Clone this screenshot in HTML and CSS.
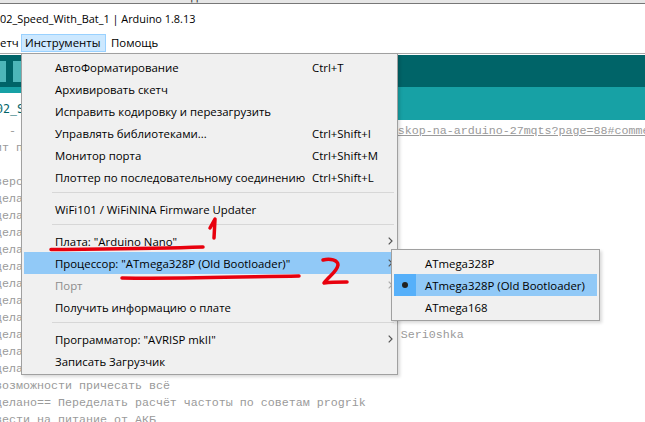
FILE: index.html
```html
<!DOCTYPE html>
<html lang="ru">
<head>
<meta charset="utf-8">
<title>Arduino</title>
<link rel="stylesheet" href="styles.css">
</head>
<body>
<div class="app">
  <div class="console"><span class="console-text">17% 1 свободно</span></div>
  <div class="titlebar">02_Speed_With_Bat_1 | Arduino 1.8.13</div>
  <div class="menubar">
    <span class="mtitle mtitle-first">етч</span>
    <span class="mtitle mtitle-active">Инструменты</span>
    <span class="mtitle mtitle-last">Помощь</span>
  </div>
  <div class="toolbar"><span class="tbtn tbtn-a"></span><span class="tbtn tbtn-b"></span></div>
  <div class="tabs"><span class="tab">02_Speed_With_Bat_1</span></div>
  <pre class="code">: -                                                       <span class="link">skop-na-arduino-27mqts?page=88#comments</span>
ит прошивку

версия
делано
делано
делано
делано
делано
делано
делано
делано
делано                                                    Seri0shka
делано
делано
возможности причесать всё
делано== Переделать расчёт частоты по советам progrik
вести на питание от АКБ</pre>
</div>

<div class="menu main-menu">
  <div class="row"><span class="label">АвтоФорматирование</span><span class="key">Ctrl+T</span></div>
  <div class="row"><span class="label">Архивировать скетч</span></div>
  <div class="row"><span class="label">Исправить кодировку и перезагрузить</span></div>
  <div class="row"><span class="label">Управлять библиотеками...</span><span class="key">Ctrl+Shift+I</span></div>
  <div class="row"><span class="label">Монитор порта</span><span class="key">Ctrl+Shift+M</span></div>
  <div class="row"><span class="label">Плоттер по последовательному соединению</span><span class="key">Ctrl+Shift+L</span></div>
  <div class="sep"></div>
  <div class="row"><span class="label">WiFi101 / WiFiNINA Firmware Updater</span></div>
  <div class="sep"></div>
  <div class="row"><span class="label">Плата: "Arduino Nano"</span><svg class="arrow" viewBox="0 0 5 8"><path d="M.7.6L4 4 .7 7.4" fill="none" stroke="#555" stroke-width="1.2"/></svg></div>
  <div class="row row-hl"><span class="label">Процессор: "ATmega328P (Old Bootloader)"</span><svg class="arrow" viewBox="0 0 5 8"><path d="M.7.6L4 4 .7 7.4" fill="none" stroke="#555" stroke-width="1.2"/></svg></div>
  <div class="row row-off"><span class="label">Порт</span><svg class="arrow" viewBox="0 0 5 8"><path d="M.7.6L4 4 .7 7.4" fill="none" stroke="#aaa" stroke-width="1.2"/></svg></div>
  <div class="row"><span class="label">Получить информацию о плате</span></div>
  <div class="sep"></div>
  <div class="row"><span class="label">Программатор: "AVRISP mkII"</span><svg class="arrow" viewBox="0 0 5 8"><path d="M.7.6L4 4 .7 7.4" fill="none" stroke="#555" stroke-width="1.2"/></svg></div>
  <div class="row"><span class="label">Записать Загрузчик</span></div>
</div>

<div class="menu sub-menu">
  <div class="subrow"><span class="label">ATmega328P</span></div>
  <div class="subrow subrow-hl"><span class="bullet"><i class="dot"></i></span><span class="label">ATmega328P (Old Bootloader)</span></div>
  <div class="subrow"><span class="label">ATmega168</span></div>
</div>

<svg class="ink" viewBox="0 0 645 422" width="645" height="422" aria-hidden="true">
  <g fill="none" stroke="#e8000d" stroke-linecap="round" stroke-linejoin="round" stroke-width="3.5">
    <path d="M51 249.5C90 249 150 249 203 247"/>
    <path d="M122 278C180 279 240 277 299 276"/>
    <path d="M210 228L215 219L214 238"/>
    <path d="M323 260C330 258 338 260 338 265C337 272 328 277 324 283C331 282 340 282 347 282"/>
  </g>
</svg>
</body>
</html>
```

FILE: styles.css
```css
* { box-sizing: border-box; }
html, body { margin: 0; padding: 0; }
body { width: 645px; height: 422px; overflow: hidden; background: #fff; font-family: "Open Sans", "Noto Sans", sans-serif; color: #000; position: relative; }
.app { display: flex; flex-direction: column; height: 422px; }
.console { height: 4px; background: #e6e6e6; border-bottom: 1px solid #777; overflow: hidden; flex: none; }
.console-text { display: block; margin: -11px 0 0 120px; font-size: 12px; line-height: 14px; color: #333; }
.titlebar { height: 30px; font-size: 10.9px; line-height: 30px; color: #000; flex: none; white-space: nowrap; }
.menubar { height: 20px; display: flex; font-size: 11.4px; line-height: 18px; flex: none; border-bottom: 1px solid #a9a9a9; }
.mtitle-first { width: 21px; overflow: hidden; white-space: nowrap; }
.mtitle-active { height: 18px; width: 85px; padding-left: 3px; background: #cce8ff; border: 1px solid #99d1ff; line-height: 16px; }
.mtitle-last { padding-left: 5px; }
.toolbar { height: 32px; margin-top: 1px; background: #006468; display: flex; padding-top: 6px; flex: none; }
.tbtn { height: 21px; background: #4db6b9; }
.tbtn-a { width: 6px; margin-right: 7px; }
.tbtn-b { width: 8px; }
.tabs { height: 33px; background: #17a1a5; padding-top: 6px; flex: none; }
.tab { display: block; width: 120px; height: 27px; padding-top: 8px; background: #fff; color: #006468; font-family: "DejaVu Sans Mono", monospace; font-size: 11.67px; line-height: 16px; text-indent: -4px; overflow: hidden; white-space: nowrap; }
.code { margin: 0 0 0 -5px; padding: 3px 0 0 0; font-family: "Liberation Mono", monospace; font-size: 11.67px; line-height: 17px; color: #9a9a9a; white-space: pre; flex: 1; overflow: hidden; }
.link { text-decoration: underline; margin-left: -3px; }
.menu { position: absolute; background: #f0f0f0; border: 1px solid #a0a0a0; box-shadow: 2px 2px 3px rgba(0,0,0,0.15); font-size: 11.4px; color: #000; }
.main-menu { left: 21px; top: 53px; width: 377px; height: 322px; padding: 2px; }
.row { display: flex; align-items: center; height: 22px; padding-left: 31px; position: relative; white-space: nowrap; }
.label { display: block; line-height: 22px; padding-top: 1px; }
.key { position: absolute; left: 288px; line-height: 22px; padding-top: 1px; }
.arrow { position: absolute; right: 2px; top: 7px; width: 5px; height: 8px; }
.row-hl { background: #91c9f7; }
.row-off { color: #8c8c8c; }
.sep { height: 1px; margin: 4px 1px 5px 28px; background: #d7d7d7; }
.sub-menu { left: 391px; top: 249px; width: 209px; height: 72px; padding: 2px; }
.subrow { display: flex; align-items: center; height: 22px; padding-left: 31px; position: relative; white-space: nowrap; }
.subrow-hl { background: #91c9f7; }
.bullet { position: absolute; left: 0; top: 0; width: 22px; height: 22px; background: #56b0fa; display: flex; align-items: center; justify-content: center; }
.dot { width: 6px; height: 6px; border-radius: 50%; background: #222; }
.ink { position: absolute; left: 0; top: 0; pointer-events: none; }
```
